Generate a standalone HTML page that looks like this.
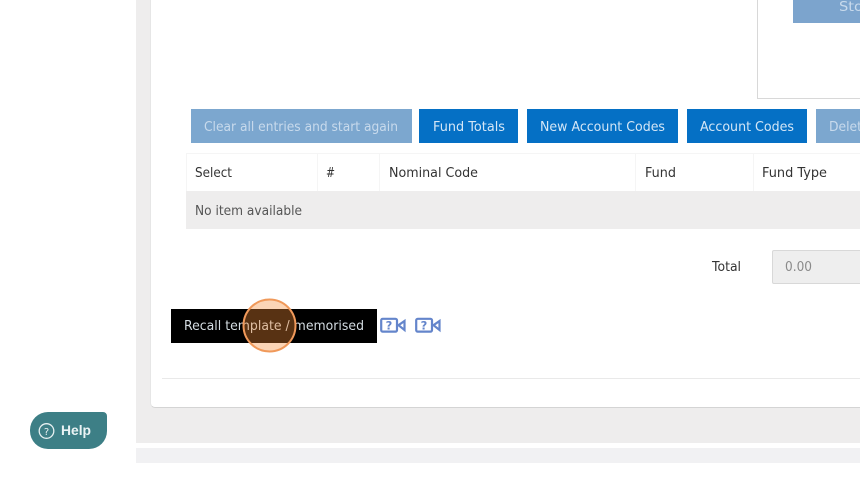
<!DOCTYPE html>
<html><head><meta charset="utf-8">
<style>
html,body{margin:0;padding:0;width:860px;height:482px;overflow:hidden;background:#fff}
.a{position:absolute}
svg{position:absolute;left:0;top:0}
text{font-family:"DejaVu Sans",sans-serif}
</style></head>
<body>
<div class="a" style="left:136px;top:0;width:724px;height:443px;background:#eeeded"></div>
<div class="a" style="left:136px;top:448px;width:724px;height:15px;background:#f1f1f3"></div>
<div class="a" style="left:150px;top:-6px;width:720px;height:414px;background:#fff;border-left:1px solid #e6e6e6;border-bottom:1px solid #d4d4d4;border-radius:0 0 0 5px;box-sizing:border-box"></div>
<div class="a" style="left:162px;top:378px;width:698px;height:1px;background:#e9e9e9"></div>
<div class="a" style="left:757px;top:-2px;width:110px;height:101px;border:1px solid #d8d8d8;box-sizing:border-box"></div>
<div class="a" style="left:793px;top:0;width:67px;height:23px;background:#7ca4cd"></div>
<div class="a" style="left:191px;top:109px;width:221px;height:34px;background:#7ca7cf"></div>
<div class="a" style="left:419px;top:109px;width:99px;height:34px;background:#0570c5"></div>
<div class="a" style="left:527px;top:109px;width:151px;height:34px;background:#0570c5"></div>
<div class="a" style="left:687px;top:109px;width:120px;height:34px;background:#0570c5"></div>
<div class="a" style="left:816px;top:109px;width:44px;height:34px;background:#7ca7cf"></div>
<div class="a" style="left:186px;top:153px;width:674px;height:1px;background:#f5f5f5"></div>
<div class="a" style="left:186px;top:153px;width:1px;height:38px;background:#f5f5f5"></div>
<div class="a" style="left:317px;top:153px;width:1px;height:38px;background:#f5f5f5"></div>
<div class="a" style="left:379px;top:153px;width:1px;height:38px;background:#f5f5f5"></div>
<div class="a" style="left:635px;top:153px;width:1px;height:38px;background:#f5f5f5"></div>
<div class="a" style="left:753px;top:153px;width:1px;height:38px;background:#f5f5f5"></div>
<div class="a" style="left:186px;top:191px;width:674px;height:38px;background:#eeeded"></div>
<div class="a" style="left:772px;top:250px;width:90px;height:34px;background:#eeeeee;border:1px solid #d8d8d8;border-radius:2px;box-sizing:border-box"></div>
<div class="a" style="left:171px;top:309px;width:206px;height:34px;background:#000"></div>
<div class="a" style="left:30px;top:412px;width:77px;height:37px;background:#3d7f86;border-radius:18px 4px 18px 18px"></div>
<svg width="860" height="482" viewBox="0 0 860 482">
<g font-size="13.5" fill="#c8daec">
<text x="204" y="131" textLength="194" lengthAdjust="spacingAndGlyphs">Clear all entries and start again</text>
<text x="839" y="11" textLength="24" lengthAdjust="spacingAndGlyphs">Sto</text>
<text x="829" y="131" textLength="33" lengthAdjust="spacingAndGlyphs">Delet</text>
</g>
<g font-size="13.5" fill="#d4e6f6">
<text x="433" y="131" textLength="72" lengthAdjust="spacingAndGlyphs">Fund Totals</text>
<text x="540" y="131" textLength="125" lengthAdjust="spacingAndGlyphs">New Account Codes</text>
<text x="700" y="131" textLength="94" lengthAdjust="spacingAndGlyphs">Account Codes</text>
</g>
<g font-size="13.5" fill="#333">
<text x="195" y="177" textLength="37" lengthAdjust="spacingAndGlyphs">Select</text>
<text x="326" y="177" textLength="9" lengthAdjust="spacingAndGlyphs">#</text>
<text x="389" y="177" textLength="89" lengthAdjust="spacingAndGlyphs">Nominal Code</text>
<text x="645" y="177" textLength="31" lengthAdjust="spacingAndGlyphs">Fund</text>
<text x="762" y="177" textLength="65" lengthAdjust="spacingAndGlyphs">Fund Type</text>
<text x="712" y="271" textLength="29" lengthAdjust="spacingAndGlyphs">Total</text>
</g>
<text x="195" y="215" font-size="13.5" fill="#555" textLength="107" lengthAdjust="spacingAndGlyphs">No item available</text>
<text x="785" y="271" font-size="13.5" fill="#8a8a8a" textLength="27" lengthAdjust="spacingAndGlyphs">0.00</text>
<text x="184" y="330" font-size="13.5" fill="#d5dde2" textLength="180" lengthAdjust="spacingAndGlyphs">Recall template / memorised</text>
<circle cx="269.500" cy="325.500" r="26" fill="#f58a35" fill-opacity=".36" stroke="#f0995a" stroke-width="2"/>
<g fill="none" stroke="#6485cb" stroke-width="2.200">
<rect x="381.200" y="318.800" width="15.800" height="12.800" rx="1.500"/>
<path d="M398.500 325.200l6-4.200v9z"/>
<rect x="416.200" y="318.800" width="15.800" height="12.800" rx="1.500"/>
<path d="M433.500 325.200l6-4.200v9z"/>
</g>
<g font-size="11.500" font-weight="bold" fill="#6485cb" text-anchor="middle">
<text x="389" y="329.500">?</text>
<text x="424" y="329.500">?</text>
</g>
<circle cx="46.500" cy="431" r="7.300" fill="none" stroke="#e6f0f1" stroke-width="1.300"/>
<text x="46.500" y="435" font-size="10" fill="#e6f0f1" text-anchor="middle">?</text>
<text x="61" y="435" font-size="14" font-weight="bold" fill="#eaf3f4" style="font-family:'Liberation Sans',sans-serif" textLength="30" lengthAdjust="spacingAndGlyphs">Help</text>
</svg>
</body></html>
